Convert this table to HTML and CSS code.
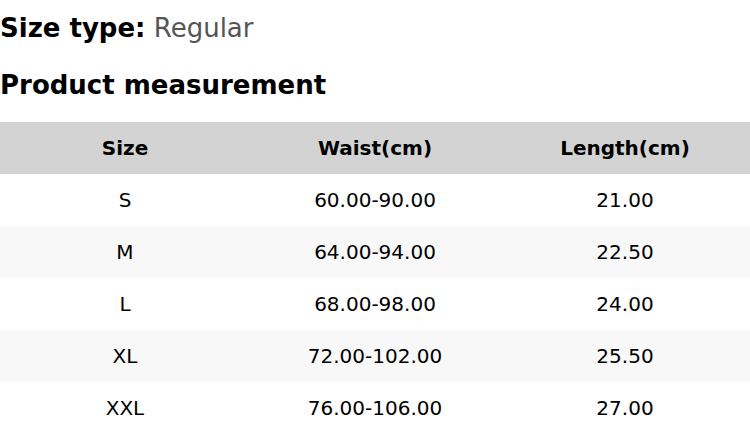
FILE: index.html
```html
<!DOCTYPE html>
<html>
<head>
<meta charset="utf-8">
<link rel="stylesheet" href="styles.css">
</head>
<body>
<div class="page">
  <div class="size-type"><span class="label">Size type:</span> <span class="value">Regular</span></div>
  <div class="title">Product measurement</div>
  <table class="measure">
    <thead>
      <tr><th>Size</th><th>Waist(cm)</th><th>Length(cm)</th></tr>
    </thead>
    <tbody>
      <tr><td>S</td><td>60.00-90.00</td><td>21.00</td></tr>
      <tr><td>M</td><td>64.00-94.00</td><td>22.50</td></tr>
      <tr><td>L</td><td>68.00-98.00</td><td>24.00</td></tr>
      <tr><td>XL</td><td>72.00-102.00</td><td>25.50</td></tr>
      <tr><td>XXL</td><td>76.00-106.00</td><td>27.00</td></tr>
    </tbody>
  </table>
</div>
</body>
</html>
```
FILE: styles.css
```css
html, body {
  margin: 0;
  padding: 0;
  background: #ffffff;
}
.page {
  font-family: "DejaVu Sans", sans-serif;
  color: #000;
}
.size-type {
  font-size: 26px;
  line-height: 56px;
  height: 56px;
}
.size-type .label {
  font-weight: bold;
}
.size-type .value {
  color: #555555;
}
.title {
  font-size: 26px;
  font-weight: bold;
  line-height: 56px;
  height: 56px;
  margin-top: 1px;
  margin-bottom: 9px;
}
.measure {
  width: 750px;
  border-collapse: collapse;
  table-layout: fixed;
  font-size: 20px;
}
.measure th, .measure td {
  height: 52px;
  padding: 0;
  text-align: center;
  vertical-align: middle;
}
.measure th {
  background: #d3d3d3;
  font-weight: bold;
}
.measure tbody tr:nth-child(even) {
  background: #f8f8f8;
}
```
